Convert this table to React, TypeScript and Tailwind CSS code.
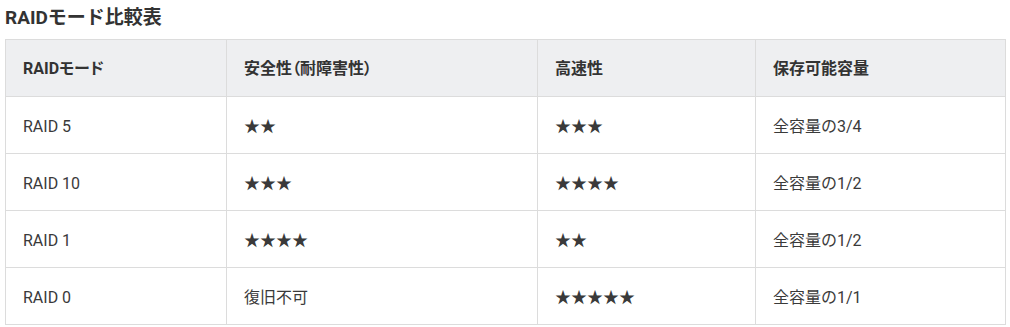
const rows = [
  { mode: 'RAID 5', safety: '★★', speed: '★★★', capacity: '全容量の3/4' },
  { mode: 'RAID 10', safety: '★★★', speed: '★★★★', capacity: '全容量の1/2' },
  { mode: 'RAID 1', safety: '★★★★', speed: '★★', capacity: '全容量の1/2' },
  { mode: 'RAID 0', safety: '復旧不可', speed: '★★★★★', capacity: '全容量の1/1' },
]

const headers = ['RAIDモード', '安全性（耐障害性）', '高速性', '保存可能容量']

export default function App() {
  return (
    <div
      className="bg-white px-[5px] pt-[4px] text-[#333]"
      style={{ fontFamily: 'Roboto, "Noto Sans CJK JP", sans-serif' }}
    >
      <h2 className="text-[19px] leading-[27px] font-bold text-[#333] mb-[8px]">RAIDモード比較表</h2>
      <table className="w-[1000px] border-collapse table-fixed text-[16px]">
        <colgroup>
          <col className="w-[221px]" />
          <col className="w-[311px]" />
          <col className="w-[218px]" />
          <col className="w-[250px]" />
        </colgroup>
        <thead>
          <tr className="bg-[#eeeff1]">
            {headers.map(h => (
              <th
                key={h}
                className="h-[57px] border border-[#dcdcdc] px-[17px] pt-[2px] text-left font-bold text-[#333] [font-feature-settings:'palt']"
              >
                {h}
              </th>
            ))}
          </tr>
        </thead>
        <tbody>
          {rows.map(r => (
            <tr key={r.mode} className="text-[#3a3a3a]">
              <td className="h-[57px] border border-[#dcdcdc] px-[17px] pt-[4px]">{r.mode}</td>
              <td className="h-[57px] border border-[#dcdcdc] px-[17px] pt-[4px]">{r.safety}</td>
              <td className="h-[57px] border border-[#dcdcdc] px-[17px] pt-[4px]">{r.speed}</td>
              <td className="h-[57px] border border-[#dcdcdc] px-[17px] pt-[4px]">{r.capacity}</td>
            </tr>
          ))}
        </tbody>
      </table>
    </div>
  )
}
